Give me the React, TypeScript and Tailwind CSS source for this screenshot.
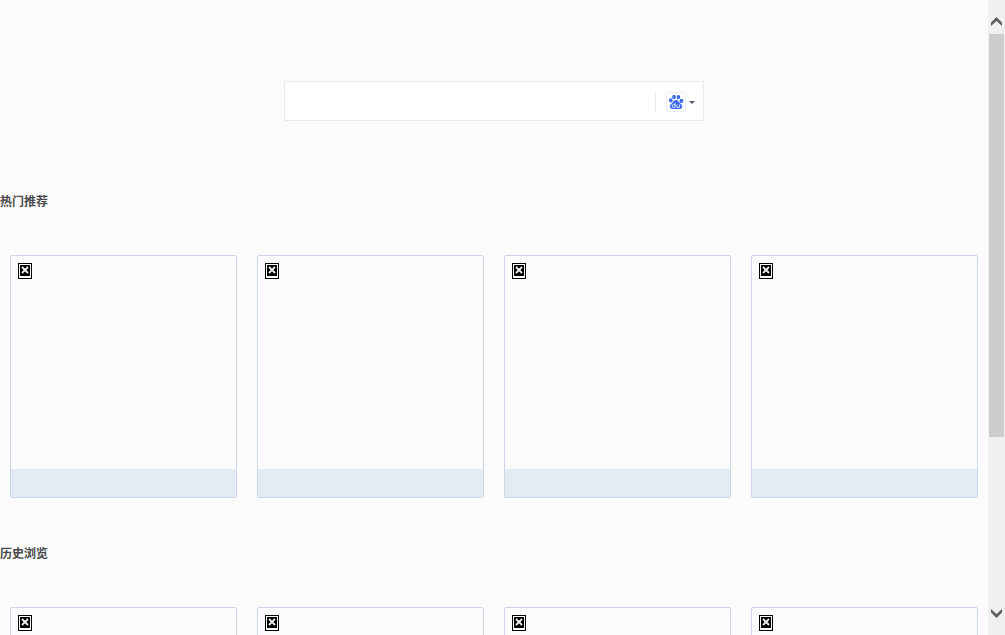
import React from "react";

function MissingImage() {
  return (
    <svg width="14" height="16" viewBox="0 0 14 16" role="img" className="block">
      <rect width="14" height="16" fill="#000" />
      <rect x="1" y="1" width="12" height="14" fill="#fff" />
      <rect x="2" y="2" width="10" height="11" fill="#000" />
      <path d="M4 4l6 6M10 4l-6 6" fill="none" stroke="#f0f0f0" strokeWidth="1.8" />
    </svg>
  );
}

function PawIcon() {
  return (
    <svg width="20" height="20" viewBox="0 0 20 20" aria-hidden="true" className="block">
      <rect x="0.5" y="0.5" width="19" height="19" rx="2" fill="#fff" stroke="#e9ebf5" />
      <g fill="#3d69ec">
        <ellipse cx="4.8" cy="8.4" rx="1.9" ry="2.1" transform="rotate(-12 4.8 8.4)" />
        <ellipse cx="8" cy="5" rx="1.8" ry="2.2" />
        <ellipse cx="12.4" cy="5.1" rx="1.8" ry="2.2" transform="rotate(12 12.4 5.1)" />
        <ellipse cx="15.4" cy="8.9" rx="1.9" ry="2.1" />
        <path d="M10 8c1.7 0 2.5 1.4 3.4 2.5 1.2 1.3 3 2.2 2.8 4.2-.2 1.7-1.5 2.5-3 2.4-1.1-.1-2.100-.2-3.200-.2s-2.200.2-3.300.2c-1.700 0-2.800-.9-2.900-2.500-.1-1.900 1.800-2.900 2.900-4.200C7.600 9.300 8.300 8 10 8z" />
      </g>
      <g fill="none" stroke="#fff" strokeWidth="0.8">
        <path d="M9 10.800v4.700H7.600a1.400 1.400 0 0 1 0-2.900H9" />
        <path d="M10.800 12.500v2.200q0 .8.800.8H13.400V12.500" />
      </g>
    </svg>
  );
}

function SearchBar() {
  return (
    <form
      onSubmit={(e) => e.preventDefault()}
      className="mx-auto flex h-10 w-[420px] max-w-full items-end border border-[#e8eaf0] bg-white pb-2"
    >
      <input
        type="text"
        aria-label="搜索"
        className="min-w-0 flex-1 bg-transparent px-3 text-sm text-[#333] outline-none"
      />
      <button
        type="button"
        aria-label="百度"
        className="flex h-5 items-center gap-[3px] border-l border-[#e6e8ee] pr-2 pl-2.5"
      >
        <PawIcon />
        <svg width="6" height="3" viewBox="0 0 6 3" aria-hidden="true">
          <path d="M0 0h6L3 3z" fill="#555b70" />
        </svg>
      </button>
    </form>
  );
}

function Card() {
  return (
    <a href="#" className="block rounded-xs border border-[#cad7e6]">
      <div className="h-[213px] p-[7px]">
        <MissingImage />
      </div>
      <div className="h-7 bg-[#e4ebf3]" />
    </a>
  );
}

function Section({ title }: { title: string }) {
  return (
    <section className="pb-[45px]">
      <h2 className="text-xs leading-5 font-bold text-[#4a4a4a]">{title}</h2>
      <div className="mt-11 grid grid-cols-4 gap-5 px-2.5">
        {[0, 1, 2, 3].map((i) => (
          <Card key={i} />
        ))}
      </div>
    </section>
  );
}

function ScrollRail() {
  return (
    <aside aria-hidden="true" className="flex w-[17px] shrink-0 flex-col bg-[#f0f0f0] px-px">
      <div className="flex h-[34px] shrink-0 items-end justify-center pb-2">
        <svg width="11" height="9" viewBox="0 0 11 9" className="block">
          <path d="M0 5.500L5.500 0L11 5.500V9L5.500 4L0 9z" fill="#606060" />
        </svg>
      </div>
      <div className="min-h-0 flex-1">
        <div className="h-[71%] bg-[#cdcdcd]" />
      </div>
      <div className="flex h-[34px] shrink-0 items-start justify-center pt-2">
        <svg width="11" height="9" viewBox="0 0 11 9" className="block">
          <path d="M0 3.500L5.500 9L11 3.500V0L5.500 5L0 0z" fill="#606060" />
        </svg>
      </div>
    </aside>
  );
}

export default function App() {
  return (
    <div className="flex h-screen overflow-hidden bg-[#fbfbfb] font-['Noto_Sans_CJK_SC',sans-serif]">
      <main className="min-w-0 flex-1 overflow-hidden">
        <div className="pt-[81px] pb-[70px]">
          <SearchBar />
        </div>
        <Section title="热门推荐" />
        <Section title="历史浏览" />
      </main>
      <ScrollRail />
    </div>
  );
}
